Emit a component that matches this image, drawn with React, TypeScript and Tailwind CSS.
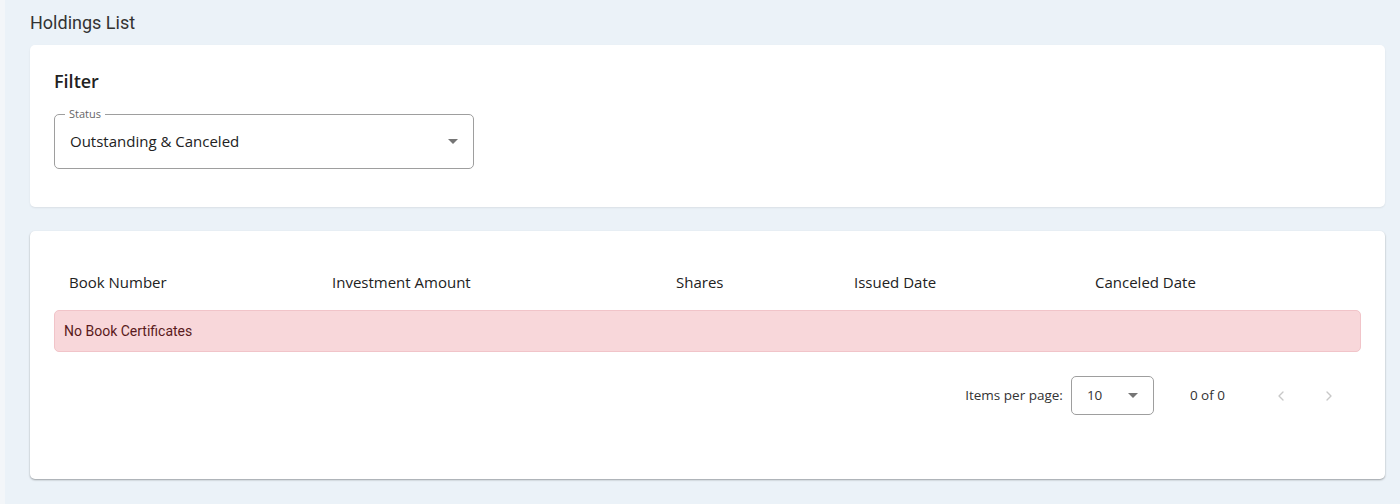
import { ChevronLeft, ChevronRight } from "lucide-react";

const poppins = { fontFamily: '"Open Sans", "Noto Sans", sans-serif' };

function Caret() {
  return (
    <svg width="10" height="5" viewBox="0 0 10 5" className="fill-[#757575]">
      <path d="M0 0 L5 5 L10 0 Z" />
    </svg>
  );
}

const columns = [
  "Book Number",
  "Investment Amount",
  "Shares",
  "Issued Date",
  "Canceled Date",
];

export default function App() {
  return (
    <div className="flex h-[504px] w-[1400px] overflow-hidden bg-[#ebf2f8]">
      <div className="w-[5px] shrink-0 bg-[#f3f6f9]" />
      <div className="flex flex-1 flex-col pl-[25px] pr-[15px]">
        {/* page title */}
        <h1 className="pt-[11px] pb-[10px] font-['Roboto',sans-serif] text-[18px] leading-[24px] text-[#333]">
          Holdings List
        </h1>

        {/* Filter card */}
        <div className="h-[162px] rounded-[5px] bg-white px-[24px] pt-[24px] shadow-[0_1px_2px_rgba(0,0,0,0.08)]">
          <h2
            className="text-[18px] font-semibold leading-[24px] text-[#222]"
            style={poppins}
          >
            Filter
          </h2>
          <div className="relative mt-[21px] flex h-[55px] w-[420px] items-center justify-between rounded-[5px] border border-[#9e9e9e] pl-[15px] pr-[15px]">
            <span
              className="absolute -top-[8px] left-[10px] bg-white px-[4px] text-[11px] leading-[14px] text-[#666]"
              style={poppins}
            >
              Status
            </span>
            <span className="text-[15px] text-[#222]" style={poppins}>
              Outstanding &amp; Canceled
            </span>
            <Caret />
          </div>
        </div>

        {/* Table card */}
        <div className="mt-[24px] h-[248px] rounded-[5px] bg-white px-[24px] pt-[38px] shadow-[0_1px_2px_rgba(0,0,0,0.35)]">
          <div
            className="grid grid-cols-[263px_344px_178px_241px_1fr] text-[15px] leading-[26px] text-[#222]"
            style={poppins}
          >
            {columns.map((c) => (
              <div key={c} className="pl-[15px]">
                {c}
              </div>
            ))}
          </div>
          <div className="mt-[15px] flex h-[42px] items-center rounded-[5px] border border-[#f1c4c9] bg-[#f8d7da] px-[9px] font-['Roboto',sans-serif] text-[14px] text-[#5a1a20]">
            No Book Certificates
          </div>

          {/* paginator */}
          <div
            className="mt-[24px] flex items-center justify-end pr-[24px] text-[13.5px] text-[#333]"
            style={poppins}
          >
            <span>Items per page:</span>
            <div className="ml-[8px] flex h-[39px] w-[83px] items-center justify-between rounded-[5px] border border-[#9e9e9e] pl-[15px] pr-[15px]">
              <span>10</span>
              <Caret />
            </div>
            <span className="ml-[36px]">0 of 0</span>
            <div className="ml-[48px] flex items-center gap-[32px] text-[#c8c8c8]">
              <ChevronLeft size={16} strokeWidth={2} />
              <ChevronRight size={16} strokeWidth={2} />
            </div>
          </div>
        </div>
      </div>
    </div>
  );
}
